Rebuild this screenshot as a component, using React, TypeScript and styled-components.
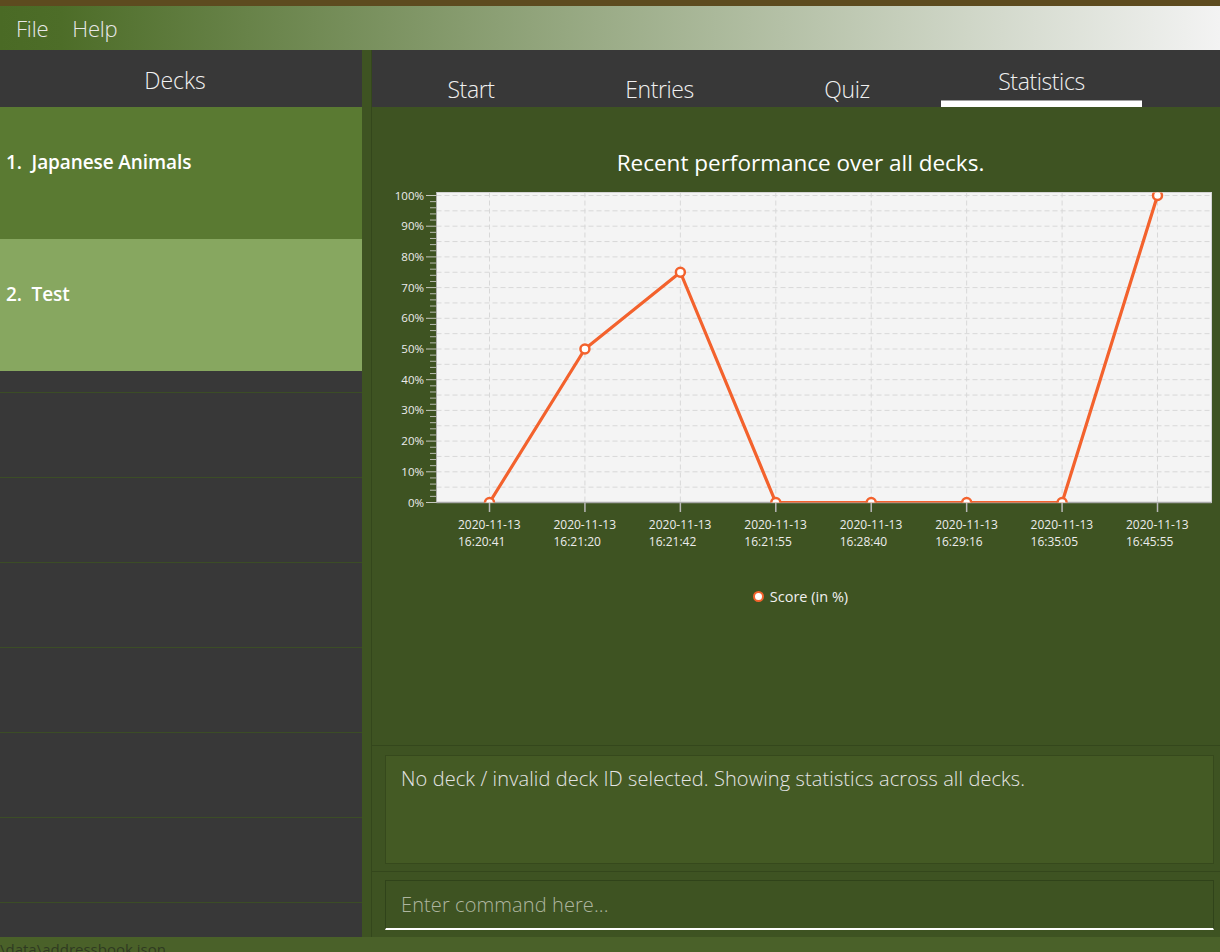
import React from 'react';
import styled, { createGlobalStyle } from 'styled-components';

const Global = createGlobalStyle`
  html, body { margin: 0; padding: 0; }
  body {
    width: 1220px;
    height: 952px;
    overflow: hidden;
    background: #383838;
    font-family: "Open Sans", "Noto Sans", sans-serif;
  }
  #root { width: 1220px; height: 952px; }
`;

const Window = styled.div`
  display: flex;
  flex-direction: column;
  width: 1220px;
  height: 952px;
  overflow: hidden;
`;

const TitleStripe = styled.div`
  height: 6px;
  flex-shrink: 0;
  background: #5d4b1f;
`;

const MenuBar = styled.div`
  height: 44px;
  flex-shrink: 0;
  display: flex;
  align-items: center;
  gap: 24px;
  padding-left: 16px;
  background: linear-gradient(to right, #4a6a25 0%, #4d6d28 5%, #f3f3f3 100%);
`;

const MenuItem = styled.span`
  font-size: 22px;
  font-weight: 300;
  color: #e8e8e8;
  letter-spacing: -0.2px;
`;

const Main = styled.div`
  flex: 1;
  min-height: 0;
  display: flex;
`;

const Sidebar = styled.div`
  width: 362px;
  flex-shrink: 0;
  display: flex;
  flex-direction: column;
  background: #383838;
  overflow: hidden;
`;

const SidebarHeader = styled.div`
  height: 57px;
  flex-shrink: 0;
  display: flex;
  align-items: center;
  justify-content: center;
  padding: 2px 12px 0 0;
  box-sizing: border-box;
  font-size: 23px;
  font-weight: 300;
  color: #f2f2f2;
`;

const DeckCard = styled.div<{ $tone: 'dark' | 'light' }>`
  height: 132px;
  flex-shrink: 0;
  box-sizing: border-box;
  padding: 41px 0 0 6px;
  background: ${(p) => (p.$tone === 'dark' ? '#5a7a32' : '#87a760')};
  color: #ffffff;
  font-size: 19px;
  font-weight: 600;
  line-height: 28px;
  white-space: pre;
  letter-spacing: -0.1px;
`;

const ListGap = styled.div`
  height: 21px;
  flex-shrink: 0;
`;

const EmptyRow = styled.div`
  height: 85px;
  flex-shrink: 0;
  box-sizing: border-box;
  border-top: 1px solid #3b4d26;
`;

const Divider = styled.div`
  width: 9px;
  flex-shrink: 0;
  background: #3e5322;
  border-right: 1px solid #34471c;
`;

const RightPanel = styled.div`
  flex: 1;
  min-width: 0;
  display: flex;
  flex-direction: column;
  background: #3e5322;
`;

const TabBar = styled.div`
  height: 57px;
  flex-shrink: 0;
  display: flex;
  padding-left: 4px;
  background: #383838;
`;

const Tab = styled.div<{ $w: number; $active?: boolean }>`
  width: ${(p) => p.$w}px;
  flex-shrink: 0;
  display: flex;
  flex-direction: column;
  justify-content: flex-end;
  align-items: stretch;
  padding-bottom: ${(p) => (p.$active ? 0 : 4)}px;
  box-sizing: border-box;
`;

const TabLabel = styled.div<{ $active?: boolean }>`
  text-align: center;
  font-size: 23px;
  font-weight: 300;
  line-height: 28px;
  color: #f0f0f0;
  letter-spacing: -0.4px;
  margin-bottom: ${(p) => (p.$active ? 5 : 0)}px;
`;

const TabUnderline = styled.div`
  height: 6px;
  background: #ffffff;
  border-top: 1px solid #a0a0a0;
`;

const ChartArea = styled.div`
  flex: 1;
  min-height: 0;
  display: flex;
  flex-direction: column;
  border-bottom: 1px solid #34471c;
  box-sizing: border-box;
  padding-top: 41px;
`;

const ChartTitle = styled.div`
  height: 30px;
  line-height: 30px;
  text-align: center;
  padding-left: 9px;
  font-size: 22.5px;
  font-weight: 400;
  color: #ffffff;
`;

const ChartSvg = styled.svg`
  display: block;
  width: 848px;
  height: 380px;
  flex-shrink: 0;
`;

const Legend = styled.div`
  margin-top: 28px;
  height: 20px;
  display: flex;
  align-items: center;
  justify-content: center;
  gap: 6px;
  padding-left: 9px;
  font-size: 14.5px;
  color: #f0f0f0;
`;

const LegendDot = styled.span`
  width: 7px;
  height: 7px;
  border-radius: 50%;
  background: #ffffff;
  border: 2.5px solid #f3622d;
`;

const ResultsPanel = styled.div`
  height: 126px;
  flex-shrink: 0;
  box-sizing: border-box;
  padding: 9px 6px 7px 13px;
  border-bottom: 1px solid #34471c;
  display: flex;
`;

const ResultBox = styled.div`
  flex: 1;
  box-sizing: border-box;
  border: 1px solid #36491c;
  background: #445a24;
  padding: 9px 15px;
  font-size: 20px;
  font-weight: 300;
  line-height: 28px;
  color: #e4e4e4;
  letter-spacing: 0.1px;
`;

const CommandPanel = styled.div`
  height: 65px;
  flex-shrink: 0;
  box-sizing: border-box;
  padding: 8px 6px 7px 13px;
  display: flex;
`;

const CommandInput = styled.input`
  flex: 1;
  box-sizing: border-box;
  height: 50px;
  margin: 0;
  border: 1px solid #30431a;
  border-bottom: 2px solid #ffffff;
  background: #3e5322;
  padding: 0 15px;
  font-family: "Open Sans", "Noto Sans", sans-serif;
  font-size: 20px;
  font-weight: 300;
  color: #ffffff;
  letter-spacing: 0.1px;
  outline: none;
  &::placeholder {
    color: #aeb6a0;
  }
`;

const StatusBar = styled.div`
  height: 15px;
  flex-shrink: 0;
  overflow: hidden;
  background: #4a6129;
  font-size: 15px;
  line-height: 20px;
  padding-top: 2px;
  box-sizing: border-box;
  color: #2f3a22;
  white-space: nowrap;
`;

const categories: [string, string][] = [
  ['2020-11-13', '16:20:41'],
  ['2020-11-13', '16:21:20'],
  ['2020-11-13', '16:21:42'],
  ['2020-11-13', '16:21:55'],
  ['2020-11-13', '16:28:40'],
  ['2020-11-13', '16:29:16'],
  ['2020-11-13', '16:35:05'],
  ['2020-11-13', '16:45:55'],
];
const scores = [0, 50, 75, 0, 0, 0, 0, 100];

const PL = 64.5;
const PR = 839.5;
const PT = 14.5;
const PB = 324.5;
const yv = (v: number) => PB - v * 3.07;
const xc = (i: number) => 117.5 + i * 95.43;

const ORANGE = '#f3622d';

function PerformanceChart() {
  const hGrid: number[] = [];
  for (let v = 5; v <= 100; v += 5) hGrid.push(v);
  const minor: number[] = [];
  for (let v = 0; v <= 100; v += 2) if (v % 10 !== 0) minor.push(v);
  const major: number[] = [];
  for (let v = 0; v <= 100; v += 10) major.push(v);
  const pts = scores.map((s, i) => `${xc(i)},${yv(s)}`).join(' ');

  return (
    <ChartSvg viewBox="0 0 848 380">
      <defs>
        <clipPath id="plotClip">
          <rect x={PL} y={PT} width={PR - PL} height={PB - PT} />
        </clipPath>
      </defs>
      <rect x={PL} y={PT} width={PR - PL} height={PB - PT} fill="#f4f4f4" stroke="#d4d4d4" strokeWidth={1} />
      {hGrid.map((v) => (
        <line key={`h${v}`} x1={PL} x2={PR} y1={yv(v)} y2={yv(v)} stroke="#d8d8d8" strokeWidth={1} strokeDasharray="5 3" />
      ))}
      {categories.map((_, i) => (
        <line key={`v${i}`} x1={xc(i)} x2={xc(i)} y1={PT} y2={PB} stroke="#d8d8d8" strokeWidth={1} strokeDasharray="5 3" />
      ))}
      <line x1={PL} x2={PL} y1={PT} y2={PB} stroke="#b0b0b0" strokeWidth={1} />
      <line x1={PL} x2={PR} y1={PB} y2={PB} stroke="#a8a8a8" strokeWidth={1.5} />
      {minor.map((v) => (
        <line key={`mi${v}`} x1={58} x2={PL} y1={yv(v)} y2={yv(v)} stroke="#b8bcb0" strokeWidth={1} />
      ))}
      {major.map((v) => (
        <line key={`ma${v}`} x1={54} x2={PL} y1={yv(v)} y2={yv(v)} stroke="#c4c6bc" strokeWidth={1} />
      ))}
      {major.map((v) => (
        <text
          key={`yl${v}`}
          x={52}
          y={yv(v) + 4}
          textAnchor="end"
          fontFamily='"Open Sans", "Noto Sans", sans-serif'
          fontSize={11.5}
          fill="#ececec"
        >
          {v}%
        </text>
      ))}
      {categories.map((_, i) => (
        <line key={`xt${i}`} x1={xc(i)} x2={xc(i)} y1={PB} y2={PB + 9.5} stroke="#b8b8b8" strokeWidth={1.5} />
      ))}
      {categories.map(([d, t], i) => (
        <text
          key={`xl${i}`}
          fontFamily='"Open Sans", "Noto Sans", sans-serif'
          fontSize={12}
          fill="#ececec"
        >
          <tspan x={xc(i) - 31.5} y={351}>{d}</tspan>
          <tspan x={xc(i) - 31.5} y={368}>{t}</tspan>
        </text>
      ))}
      <g clipPath="url(#plotClip)">
        <polyline points={pts} fill="none" stroke={ORANGE} strokeWidth={3.2} strokeLinejoin="round" />
        {scores.map((s, i) => (
          <circle key={`m${i}`} cx={xc(i)} cy={yv(s)} r={4.5} fill="#ffffff" stroke={ORANGE} strokeWidth={2.5} />
        ))}
      </g>
    </ChartSvg>
  );
}

export default function App() {
  const tabs = [
    { label: 'Start', w: 190 },
    { label: 'Entries', w: 187 },
    { label: 'Quiz', w: 188 },
    { label: 'Statistics', w: 201, active: true },
  ];
  return (
    <>
      <Global />
      <Window>
        <TitleStripe />
        <MenuBar>
          <MenuItem>File</MenuItem>
          <MenuItem>Help</MenuItem>
        </MenuBar>
        <Main>
          <Sidebar>
            <SidebarHeader>Decks</SidebarHeader>
            <DeckCard $tone="dark">{'1.  Japanese Animals'}</DeckCard>
            <DeckCard $tone="light">{'2.  Test'}</DeckCard>
            <ListGap />
            {Array.from({ length: 7 }).map((_, i) => (
              <EmptyRow key={i} />
            ))}
          </Sidebar>
          <Divider />
          <RightPanel>
            <TabBar>
              {tabs.map((t) => (
                <Tab key={t.label} $w={t.w} $active={t.active}>
                  <TabLabel $active={t.active}>{t.label}</TabLabel>
                  {t.active && <TabUnderline />}
                </Tab>
              ))}
            </TabBar>
            <ChartArea>
              <ChartTitle>Recent performance over all decks.</ChartTitle>
              <PerformanceChart />
              <Legend>
                <LegendDot />
                <span>Score (in %)</span>
              </Legend>
            </ChartArea>
            <ResultsPanel>
              <ResultBox>No deck / invalid deck ID selected. Showing statistics across all decks.</ResultBox>
            </ResultsPanel>
            <CommandPanel>
              <CommandInput placeholder="Enter command here..." />
            </CommandPanel>
          </RightPanel>
        </Main>
        <StatusBar>\data\addressbook.json</StatusBar>
      </Window>
    </>
  );
}
